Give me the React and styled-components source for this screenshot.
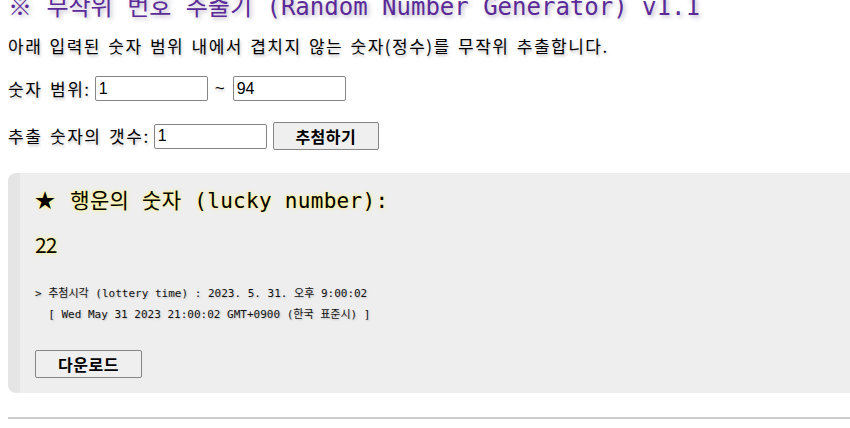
import React from "react";
import styled, { createGlobalStyle } from "styled-components";

const GlobalStyle = createGlobalStyle`
  html, body {
    margin: 0;
    padding: 0;
    background: #ffffff;
    overflow: hidden;
  }
  body {
    padding-left: 8px;
    font-family: "Noto Sans CJK KR", "Liberation Sans", sans-serif;
    color: #000;
  }
`;

const Page = styled.div`
  margin-top: -7px;
  text-shadow: 1px 2px 3px rgba(0, 0, 0, 0.25);
`;

const Title = styled.h1`
  margin: 0;
  font-family: "DejaVu Sans Mono", "Noto Sans CJK KR", monospace;
  font-size: 24px;
  font-weight: normal;
  line-height: 28px;
  color: #5a2b98;
  text-shadow: 2px 2px 4px rgba(60, 40, 90, 0.35);
  white-space: nowrap;
`;

const Intro = styled.p`
  margin: 14px 0 0;
  font-size: 17px;
  line-height: 22px;
  letter-spacing: 1.5px;
  word-spacing: 2px;
`;

const Row = styled.div`
  display: flex;
  align-items: center;
  margin-top: ${(p) => p.$gap}px;
  font-size: 17px;
  line-height: 24px;
  letter-spacing: 1.6px;
  word-spacing: 2px;
`;

const Label = styled.span`
  margin-right: 4px;
`;

const Tilde = styled.span`
  margin: 0 8px 0 7px;
  font-family: "Liberation Sans", sans-serif;
  letter-spacing: 0;
`;

const Input = styled.input`
  box-sizing: border-box;
  width: 113px;
  height: 25px;
  padding: 1px 3px;
  border: 1px solid #858585;
  border-radius: 2px;
  font-family: "Liberation Sans", sans-serif;
  font-size: 16px;
  letter-spacing: 0;
  color: #000;
  background: #fff;
  text-shadow: none;
`;

const Button = styled.button`
  box-sizing: border-box;
  width: ${(p) => p.$w}px;
  height: ${(p) => p.$h}px;
  margin-left: ${(p) => p.$ml || 0}px;
  padding: 0;
  border: 1px solid #858585;
  border-radius: 2px;
  background: #efefef;
  font-family: "Noto Sans CJK KR", sans-serif;
  font-size: 16px;
  font-weight: bold;
  letter-spacing: 0.5px;
  color: #000;
  text-shadow: none;
  cursor: pointer;
`;

const ResultBox = styled.section`
  margin-top: 23px;
  border-left: 12px solid #e5e5e5;
  border-radius: 8px 0 0 8px;
  background: #eeeeee;
  padding: 12px 0 15px 15px;
  text-shadow: none;
`;

const LuckyTitle = styled.div`
  font-family: "DejaVu Sans Mono", "Noto Sans CJK KR", monospace;
  font-size: 21px;
  line-height: 30px;
  letter-spacing: 0.3px;
  text-shadow: 0 0 4px #fff27a, 0 0 2px #fff27a;
`;

const Star = styled.span`
  font-family: "Noto Sans CJK KR", sans-serif;
  font-size: 20px;
  margin-right: 2px;
`;

const LuckyNumber = styled.div`
  margin-top: 15px;
  font-family: "Noto Sans CJK KR", "Liberation Sans", sans-serif;
  font-size: 21px;
  line-height: 26px;
  letter-spacing: -1px;
  text-shadow: 0 0 4px #fff27a, 0 0 2px #fff27a;
`;

const TimeBlock = styled.div`
  margin-top: 26px;
  font-family: "DejaVu Sans Mono", "Noto Sans CJK KR", monospace;
  font-size: 11px;
  line-height: 21px;
  color: #111;
  text-shadow: 1px 1px 2px rgba(0, 0, 0, 0.2);
  white-space: pre;
`;

const Actions = styled.div`
  margin-top: 25px;
  display: flex;
`;

const Divider = styled.hr`
  margin: 24px 0 0;
  border: none;
  border-top: 2px solid #cccccc;
  height: 0;
`;

export default function App() {
  return (
    <>
      <GlobalStyle />
      <Page>
        <Title>※ 무작위 번호 추출기 (Random Number Generator) v1.1</Title>
        <Intro>아래 입력된 숫자 범위 내에서 겹치지 않는 숫자(정수)를 무작위 추출합니다.</Intro>
        <Row $gap={19}>
          <Label>숫자 범위:</Label>
          <Input defaultValue="1" />
          <Tilde>~</Tilde>
          <Input defaultValue="94" />
        </Row>
        <Row $gap={21}>
          <Label>추출 숫자의 갯수:</Label>
          <Input defaultValue="1" />
          <Button $w={106} $h={28} $ml={6}>추첨하기</Button>
        </Row>
        <ResultBox>
          <LuckyTitle>
            <Star>★</Star> 행운의 숫자 (lucky number):
          </LuckyTitle>
          <LuckyNumber>22</LuckyNumber>
          <TimeBlock>
            {"> 추첨시각 (lottery time) : 2023. 5. 31. 오후 9:00:02\n  [ Wed May 31 2023 21:00:02 GMT+0900 (한국 표준시) ]"}
          </TimeBlock>
          <Actions>
            <Button $w={107} $h={28}>다운로드</Button>
          </Actions>
        </ResultBox>
        <Divider />
      </Page>
    </>
  );
}
